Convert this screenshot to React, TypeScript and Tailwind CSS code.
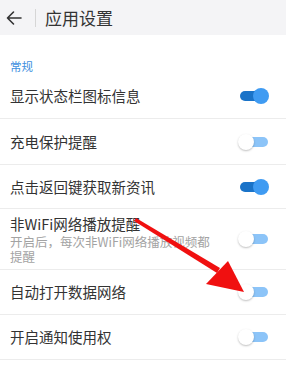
import React from "react";

const font = { fontFamily: '"Noto Sans CJK SC", "Noto Sans", sans-serif' };

function Toggle({ on }: { on: boolean }) {
  return (
    <div className="relative w-[30px] h-[16px] flex items-center">
      <div className={`w-[28px] h-[10px] rounded-full ml-[1px] ${on ? "bg-[#1a73c8]" : "bg-[#8cc4f8]"}`} />
      {on ? (
        <div className="absolute right-0 top-0 w-[16px] h-[16px] rounded-full bg-[#3f9bf2]" />
      ) : (
        <div className="absolute left-[-1px] top-0 w-[16px] h-[16px] rounded-full bg-white shadow-[0_1px_2px_rgba(0,0,0,0.25)]" />
      )}
    </div>
  );
}

function Row({ title, sub, on, h }: { title: string; sub?: string; on: boolean; h: string }) {
  return (
    <div className={`flex items-center justify-between pl-[10px] pr-[17px] border-b border-[#ececec] ${h}`}>
      <div className="flex flex-col">
        <div className="text-[14.5px] leading-[18px] text-[#333333]">{title}</div>
        {sub && <div className="text-[12.5px] leading-[15px] text-[#a3a3a3] w-[212px] mt-[1px]">{sub}</div>}
      </div>
      <Toggle on={on} />
    </div>
  );
}

export default function App() {
  return (
    <div className="relative w-[286px] h-[369px] bg-white overflow-hidden" style={font}>
      <div className="h-[35px] bg-[#f4f4f6] flex items-center">
        <svg width="18" height="16" viewBox="0 0 18 16" className="ml-[5px]">
          <path d="M16 8H2.5M8.5 2L2.5 8l6 6" stroke="#333" strokeWidth="1.6" fill="none" strokeLinecap="round" strokeLinejoin="round" />
        </svg>
        <div className="w-px h-[18px] bg-[#d6d6d6] ml-[12px]" />
        <div className="ml-[9px] text-[17px] text-[#333333]">应用设置</div>
      </div>
      <div className="pl-[10px] pt-[24px] text-[11.5px] leading-[14px] text-[#3d8fe0]">常规</div>
      <Row title="显示状态栏图标信息" on={true} h="h-[46px]" />
      <Row title="充电保护提醒" on={false} h="h-[46px]" />
      <Row title="点击返回键获取新资讯" on={true} h="h-[44px]" />
      <Row title="非WiFi网络播放提醒" sub="开启后，每次非WiFi网络播放视频都提醒" on={false} h="h-[61px]" />
      <Row title="自动打开数据网络" on={false} h="h-[45px]" />
      <Row title="开启通知使用权" on={false} h="h-[45px]" />
      <svg className="absolute left-0 top-0" width="286" height="369" viewBox="0 0 286 369">
        <polygon points="134,221 136,218 220,268 217,273" fill="#f01010" />
        <polygon points="244,292 206,284 228,261" fill="#f01010" />
      </svg>
    </div>
  );
}
